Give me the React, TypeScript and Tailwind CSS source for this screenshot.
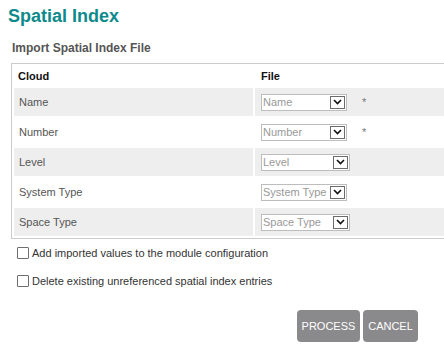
import React from 'react';

type Row = { label: string; value: string; width: number; required?: boolean };

const rows: Row[] = [
  { label: 'Name', value: 'Name', width: 86, required: true },
  { label: 'Number', value: 'Number', width: 86, required: true },
  { label: 'Level', value: 'Level', width: 89 },
  { label: 'System Type', value: 'System Type', width: 86 },
  { label: 'Space Type', value: 'Space Type', width: 89 },
];

function FakeSelect({ value, width }: { value: string; width: number }) {
  return (
    <div
      className="flex h-[17px] items-stretch border border-[#bdbdbd] bg-white"
      style={{ width }}
    >
      <span className="flex-1 overflow-hidden whitespace-nowrap pl-[1px] text-[11px] leading-[15px] text-[#999]">
        {value}
      </span>
      <span className="m-[1px] flex w-[15px] items-center justify-center border border-[#6b6b6b] bg-white">
        <svg width="9" height="6" viewBox="0 0 9 6">
          <path d="M1 1 L4.5 4.5 L8 1" fill="none" stroke="#111" strokeWidth="1.6" />
        </svg>
      </span>
    </div>
  );
}

function CheckRow({ text }: { text: string }) {
  return (
    <label className="flex h-[14px] items-center gap-[3px]">
      <span className="h-[12px] w-[12px] rounded-[1px] border border-[#6e6e6e] bg-white" />
      <span className="text-[11px] text-[#333]">{text}</span>
    </label>
  );
}

export default function App() {
  return (
    <div className="h-[348px] w-[444px] overflow-hidden bg-white font-['Liberation_Sans',Arial,sans-serif]">
      <h1 className="pl-[8px] pt-[4px] text-[18px] font-bold leading-[24px] text-[#0e8a8c]">
        Spatial Index
      </h1>
      <div className="mt-[13px] pl-[12px] text-[12px] font-bold leading-[14px] text-[#555]">
        Import Spatial Index File
      </div>

      <table className="ml-[11px] mt-[8px] w-[460px] border-separate border-spacing-[2px] border border-r-0 border-[#cccccc]">
        <thead>
          <tr className="h-[20px] text-left text-[11px] font-bold text-[#111]">
            <th className="w-[239px] pl-[4px] font-bold">Cloud</th>
            <th className="pl-[6px] font-bold">File</th>
          </tr>
        </thead>
        <tbody>
          {rows.map((r, i) => (
            <tr
              key={r.label}
              className={i % 2 === 0 ? 'h-[28px] bg-[#eeeeee]' : 'h-[28px] bg-white'}
            >
              <td className="pl-[5px] text-[11px] text-[#555]">{r.label}</td>
              <td className="pl-[6px]">
                <div className="flex items-center">
                  <FakeSelect value={r.value} width={r.width} />
                  {r.required ? (
                    <span className="ml-[15px] text-[11px] text-[#777]">*</span>
                  ) : null}
                </div>
              </td>
            </tr>
          ))}
        </tbody>
      </table>

      <div className="mt-[7px] flex flex-col gap-[14px] pl-[17px]">
        <CheckRow text="Add imported values to the module configuration" />
        <CheckRow text="Delete existing unreferenced spatial index entries" />
      </div>

      <div className="mt-[22px] flex gap-[3px] pl-[297px]">
        <button className="h-[32px] w-[63px] rounded-[4px] bg-[#8a898b] text-[11px] text-white">
          PROCESS
        </button>
        <button className="h-[32px] w-[55px] rounded-[4px] bg-[#8a898b] text-[11px] text-white">
          CANCEL
        </button>
      </div>
    </div>
  );
}
